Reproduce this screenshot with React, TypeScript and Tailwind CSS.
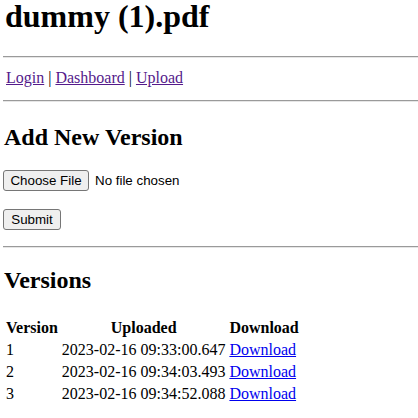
import React from "react"

const versions = [
  { id: 1, uploaded: "2023-02-16 09:33:00.647" },
  { id: 2, uploaded: "2023-02-16 09:34:03.493" },
  { id: 3, uploaded: "2023-02-16 09:34:52.088" },
]

function Rule({ className = "" }: { className?: string }) {
  return (
    <div
      className={`h-[2px] border-t border-b border-t-[#9a9a9a] border-b-[#e6e6e6] ${className}`}
    />
  )
}

export default function App() {
  return (
    <div className="w-[418px] h-[418px] overflow-hidden bg-white text-black font-['Liberation_Serif',serif] pl-[3px]">
      <h1 className="text-[32px] leading-[32px] font-bold pl-[2px]">dummy (1).pdf</h1>

      <Rule className="mt-[24px]" />

      {/* Nav */}
      <div className="mt-[11px] text-[16px] leading-[18px] pl-[3px]">
        <a href="#" className="text-[#551a8b] underline">
          Login
        </a>{" "}
        |{" "}
        <a href="#" className="text-[#551a8b] underline">
          Dashboard
        </a>{" "}
        |{" "}
        <a href="#" className="text-[#551a8b] underline">
          Upload
        </a>
      </div>

      <Rule className="mt-[13px]" />

      <h2 className="mt-[23px] text-[24px] leading-[24px] font-bold pl-[1px]">
        Add New Version
      </h2>

      {/* File picker */}
      <div className="mt-[21px] flex items-center gap-[6px] font-['Liberation_Sans',sans-serif] text-[13.33px]">
        <button className="w-[86px] h-[21px] bg-[#efefef] border border-[#767676] rounded-[3px] text-black">
          Choose File
        </button>
        <span>No file chosen</span>
      </div>

      <div className="mt-[18px] flex">
        <button className="w-[58px] h-[21px] bg-[#efefef] border border-[#767676] rounded-[3px] text-black font-['Liberation_Sans',sans-serif] text-[13.33px]">
          Submit
        </button>
      </div>

      <Rule className="mt-[16px]" />

      <h2 className="mt-[20px] text-[24px] leading-[24px] font-bold pl-[1px]">
        Versions
      </h2>

      {/* Versions table */}
      <table className="mt-[24px] border-separate border-spacing-[2px] text-[16px] leading-[18px]">
        <thead>
          <tr>
            <th className="p-[1px] font-bold text-center">Version</th>
            <th className="p-[1px] font-bold text-center">Uploaded</th>
            <th className="p-[1px] font-bold text-center">Download</th>
          </tr>
        </thead>
        <tbody>
          {versions.map((v) => (
            <tr key={v.id}>
              <td className="p-[1px]">{v.id}</td>
              <td className="p-[1px]">{v.uploaded}</td>
              <td className="p-[1px]">
                <a href="#" className="text-[#0000ee] underline">
                  Download
                </a>
              </td>
            </tr>
          ))}
        </tbody>
      </table>
    </div>
  )
}
